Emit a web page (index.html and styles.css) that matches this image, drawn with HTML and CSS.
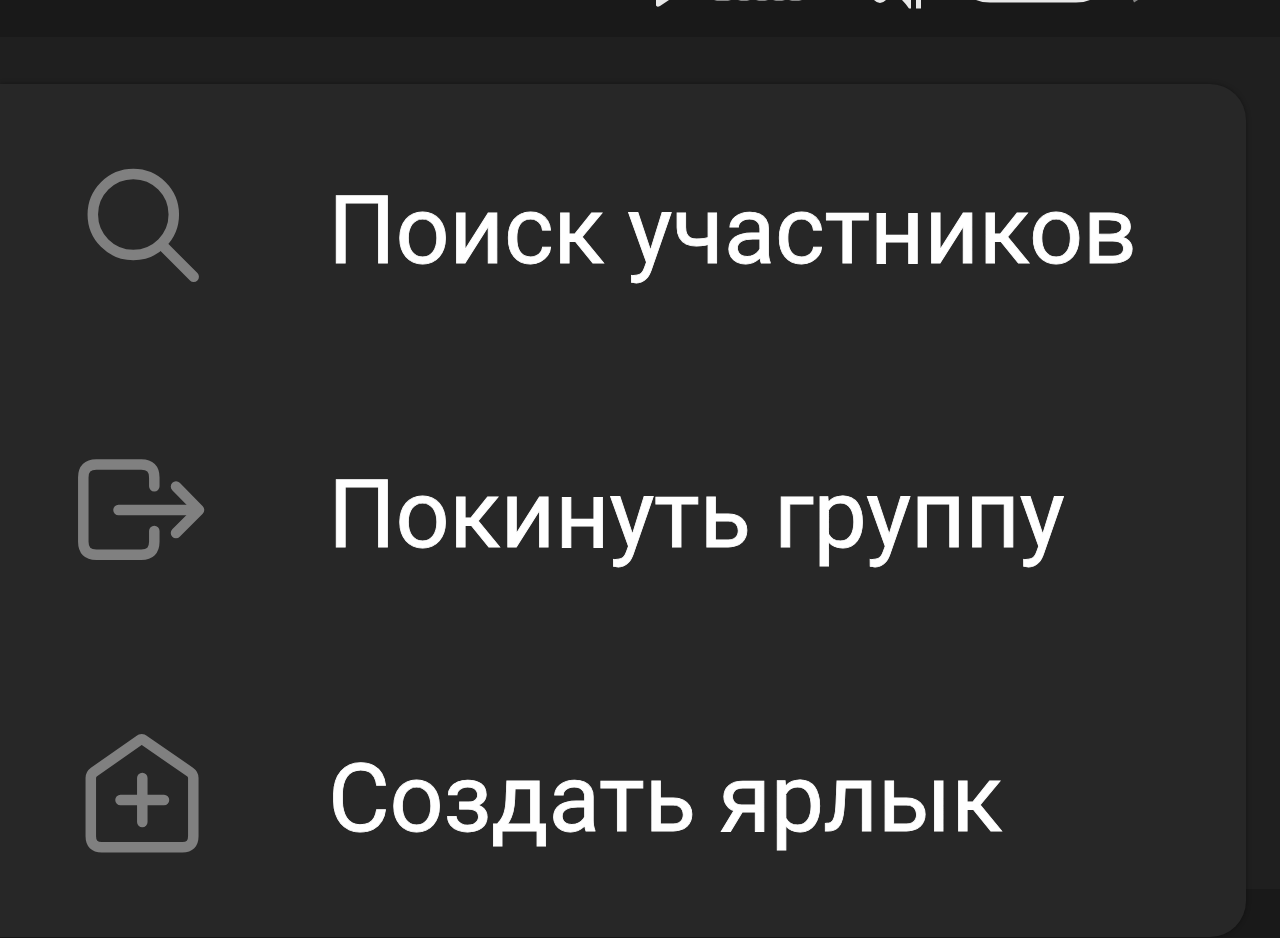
FILE: index.html
```
<!DOCTYPE html>
<html lang="ru">
<head>
    <meta charset="UTF-8">
    <meta name="viewport" content="width=device-width, initial-scale=1.0">
    <title>Меню группы</title>
    <link rel="stylesheet" href="styles.css">
</head>
<body>
    <header class="status-bar">
        <svg class="status-icons" viewBox="0 0 1280 37">
            <path d="M656 0V5.5Q657 7.5 660 6L669 0Z"/>
            <path class="dim" d="M714 0H731L728 1H717ZM738 0H750L747 1H741ZM756 0H768L765 1H759ZM773 0H785L782 1H776ZM789 0H802L799 1H792Z"/>
            <path d="M874 0H886Q880 6 874 0ZM902 0H911V8.5H909Q906 4 902 0ZM916 0H921V8.5H916Z"/>
            <path d="M976 0H1090Q1084 2.6 1076 2.6H990Q982 2.6 976 0Z"/>
            <path class="dim" d="M1133 0H1138L1134 2.5Z"/>
        </svg>
    </header>

    <main class="screen">
        <nav class="menu">
            <a class="menu-item">
                <svg class="menu-icon" viewBox="0 0 160 160">
                    <circle cx="73.3" cy="68.5" r="40.5"/>
                    <path d="M102 99L133.7 130.8"/>
                </svg>
                <span class="menu-label">Поиск участников</span>
            </a>
            <a class="menu-item">
                <svg class="menu-icon" viewBox="0 0 160 160">
                    <path d="M94.3 56.3V47.5Q94.3 34.5 81.3 34.5H36.3Q23.3 34.5 23.3 47.5V111.7Q23.3 124.7 36.3 124.7H81.3Q94.3 124.7 94.3 111.7V101"/>
                    <path d="M58.5 80H138"/>
                    <path d="M116 56.5L139 80L116 103"/>
                </svg>
                <span class="menu-label">Покинуть группу</span>
            </a>
            <a class="menu-item">
                <svg class="menu-icon" viewBox="0 0 160 160">
                    <path d="M79 26.5Q81.7 24.5 84.4 26.5L130 58Q133.3 60.3 133.3 64V122.3Q133.3 133.3 122.3 133.3H41.8Q30.8 133.3 30.8 122.3V64Q30.8 60.3 34 58Z"/>
                    <path d="M60.5 86H104M82.3 64V108"/>
                </svg>
                <span class="menu-label">Создать ярлык</span>
            </a>
        </nav>
    </main>
</body>
</html>
```
FILE: styles.css
```
body {
    margin: 0;
    height: 938px;
    display: flex;
    flex-direction: column;
    overflow: hidden;
    background-color: #191919;
    font-family: Roboto, sans-serif;
}

.status-bar {
    height: 37px;
    flex: none;
}

.status-icons {
    display: block;
    width: 1280px;
    height: 37px;
    fill: #e8e8e8;
}

.status-icons .dim {
    fill: #858585;
}

.screen {
    height: 805px;
    flex: none;
    padding: 47px 34px 0 0;
    background-color: #1f1f1f;
}

.menu {
    height: 853px;
    background-color: #272727;
    border-radius: 0 36px 36px 0;
    box-shadow: 0 0 5px rgba(0, 0, 0, 0.35);
}

.menu-item {
    display: flex;
    align-items: center;
    height: 284px;
    padding-left: 60px;
}

.menu-icon {
    flex: none;
    width: 160px;
    height: 160px;
    fill: none;
    stroke: #808080;
    stroke-width: 10.5;
    stroke-linecap: round;
    stroke-linejoin: round;
}

.menu-label {
    margin-left: 108px;
    padding-top: 9px;
    font-size: 95px;
    letter-spacing: -0.3px;
    color: #fff;
    -webkit-text-stroke: 0.8px #fff;
    white-space: nowrap;
}
```
